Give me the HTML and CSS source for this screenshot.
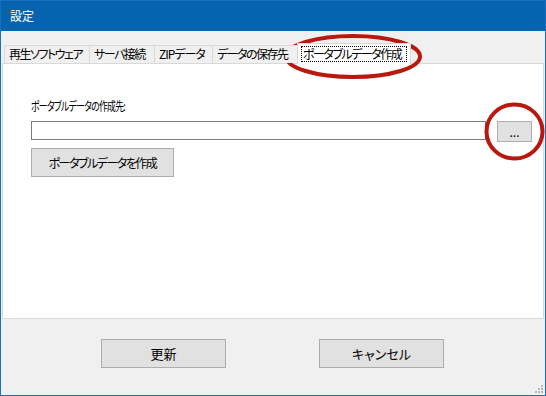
FILE: index.html
```html
<!DOCTYPE html>
<html lang="ja">
<head>
    <meta charset="UTF-8">
    <title>設定</title>
    <link rel="stylesheet" href="styles.css">
</head>
<body>
    <div class="window">
        <div class="titlebar">設定</div>
        <div class="client">
            <div class="tab-control">
                <div class="tabstrip">
                    <div class="tab tab-player">再生ソフトウェア</div>
                    <div class="tab tab-server">サーバ接続</div>
                    <div class="tab tab-zip">ZIPデータ</div>
                    <div class="tab tab-save">データの保存先</div>
                    <div class="tab active"><span class="focus">ポータブルデータ作成</span></div>
                </div>
                <div class="panel">
                    <div class="field-label"><span class="label-text">ポータブルデータの作成先:</span></div>
                    <div class="path-row">
                        <input type="text" class="path-input">
                        <button class="btn browse-btn">...</button>
                    </div>
                    <button class="btn create-btn">ポータブルデータを作成</button>
                </div>
            </div>
            <div class="footer">
                <button class="btn footer-btn">更新</button>
                <button class="btn footer-btn">キャンセル</button>
            </div>
        </div>

        <!-- grip -->
        <svg class="grip" width="10" height="10" viewBox="0 0 10 10">
            <rect x="7" y="1" width="2" height="2" fill="#b8b8b8"/>
            <rect x="4" y="4" width="2" height="2" fill="#b8b8b8"/>
            <rect x="7" y="4" width="2" height="2" fill="#b8b8b8"/>
            <rect x="1" y="7" width="2" height="2" fill="#b8b8b8"/>
            <rect x="4" y="7" width="2" height="2" fill="#b8b8b8"/>
            <rect x="7" y="7" width="2" height="2" fill="#b8b8b8"/>
        </svg>

        <!-- red annotation marks -->
        <svg class="marks" width="546" height="396" viewBox="0 0 546 396">
            <ellipse cx="353" cy="56.5" rx="67" ry="20.5" fill="none" stroke="#b8180d" stroke-width="4"/>
            <ellipse cx="514.5" cy="131.5" rx="28" ry="27" fill="none" stroke="#b8180d" stroke-width="4"/>
        </svg>
    </div>
</body>
</html>
```

FILE: styles.css
```css
* {
    box-sizing: border-box;
}

body {
    margin: 0;
    font-family: "Noto Sans CJK JP", "Noto Sans", sans-serif;
    font-size: 12px;
    font-feature-settings: "palt";
    color: #000;
}

.window {
    position: relative;
    width: 546px;
    height: 396px;
    border: 1px solid #1a6fc0;
    display: flex;
    flex-direction: column;
    background: #f0f0f0;
}

.titlebar {
    height: 30px;
    background: #0563b0;
    color: #fff;
    padding-left: 9px;
    line-height: 30px;
}

.client {
    flex: 1;
    display: flex;
    flex-direction: column;
}

.tab-control {
    padding: 11px 1px 0 1px;
}

.tabstrip {
    display: flex;
    align-items: flex-end;
    padding-left: 2px;
    height: 21px;
    position: relative;
    z-index: 1;
}

.tab {
    height: 18px;
    line-height: 16px;
    padding: 0 0 0 4px;
    border: 1px solid #d9d9d9;
    border-bottom: none;
    margin-left: -1px;
    background: #f0f0f0;
    white-space: nowrap;
    overflow: hidden;
    letter-spacing: -1.5px;
}

.tab-player {
    width: 86px;
    margin-left: 0;
}

.tab-server {
    width: 66px;
}

.tab-zip {
    width: 59px;
    letter-spacing: -1px;
}

.tab-save {
    width: 88px;
}

.tab.active {
    width: 114px;
    height: 21px;
    margin: 0 -2px -1px -3px;
    padding: 2px 3px 0 3px;
    background: #fff;
}

.focus {
    display: block;
    border: 1px dotted #000;
    line-height: 14px;
    padding: 0 1px;
}

.panel {
    height: 256px;
    background: #fff;
    border: 1px solid #d9d9d9;
    padding: 34px 0 0 28px;
}

.field-label {
    line-height: 16px;
    margin-bottom: 7px;
}

.label-text {
    display: inline-block;
    letter-spacing: -1px;
    transform: scaleX(0.74);
    transform-origin: left center;
    white-space: nowrap;
}

.path-row {
    display: flex;
    align-items: flex-start;
    gap: 11px;
}

.path-input {
    width: 455px;
    height: 19px;
    border: 1px solid #7a7a7a;
    margin: 0;
    padding: 0 3px;
    font: inherit;
    outline: none;
}

.btn {
    background: #e1e1e1;
    border: 1px solid #adadad;
    font: inherit;
    font-feature-settings: "palt";
    color: #000;
    padding: 0;
    margin: 0;
}

.browse-btn {
    width: 35px;
    height: 21px;
    line-height: 14px;
}

.create-btn {
    display: block;
    width: 143px;
    height: 29px;
    margin-top: 6px;
    letter-spacing: -1.5px;
}

.footer {
    flex: 1;
    display: flex;
    padding: 20px 0 0 100px;
    gap: 93px;
}

.footer-btn {
    width: 125px;
    height: 29px;
    font-size: 13px;
}

.grip {
    position: absolute;
    right: 1px;
    bottom: 1px;
}

.marks {
    position: absolute;
    left: -1px;
    top: -1px;
    pointer-events: none;
}
```
